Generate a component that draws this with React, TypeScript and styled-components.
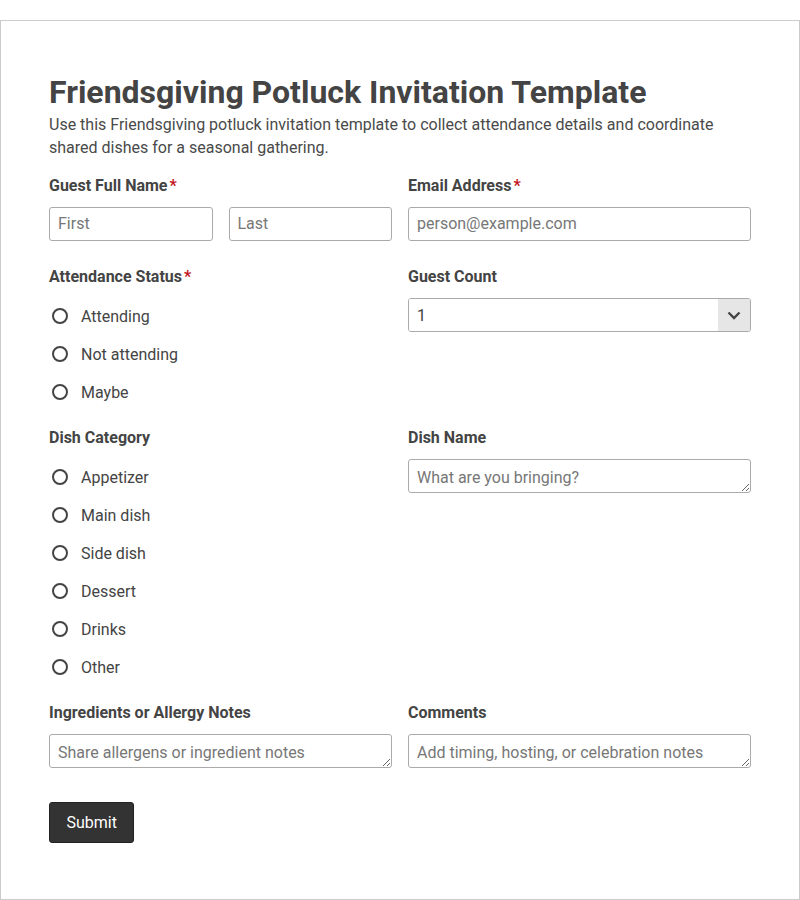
import React from "react";
import styled, { createGlobalStyle } from "styled-components";

const GlobalStyle = createGlobalStyle`
  * { box-sizing: border-box; }
  body {
    margin: 0;
    font-family: Roboto, "Liberation Sans", Arial, sans-serif;
    color: #444;
    background: #fff;
  }
`;

const Page = styled.div`
  margin-top: 20px;
  height: 880px;
  border: 1px solid #ccc;
  padding: 50px 48px 48px;
`;

const Title = styled.h1`
  margin: 0;
  font-size: 32px;
  line-height: 42px;
  font-weight: 700;
  color: #444;
`;

const Description = styled.p`
  margin: 0 0 16px;
  font-size: 16px;
  line-height: 23px;
  color: #4a4a4a;
`;

const Grid = styled.div`
  display: grid;
  grid-template-columns: 1fr 1fr;
  column-gap: 16px;
  row-gap: 25px;
`;

const Field = styled.div`
  display: flex;
  flex-direction: column;
  min-width: 0;
`;

const Label = styled.div`
  font-size: 16px;
  line-height: 22px;
  font-weight: 700;
  color: #444;
  margin-bottom: 10px;
`;

const Required = styled.span`
  color: #c0141e;
  margin-left: 2px;
`;

const Split = styled.div`
  display: grid;
  grid-template-columns: 1fr 1fr;
  gap: 16px;
`;

const TextInput = styled.input`
  width: 100%;
  height: 34px;
  border: 1px solid #aaa;
  border-radius: 3px;
  padding: 0 8px 2px;
  font: inherit;
  font-size: 16px;
  color: #444;
  &::placeholder { color: #777; }
`;

const TextArea = styled.textarea`
  width: 100%;
  height: 34px;
  min-height: 34px;
  border: 1px solid #aaa;
  border-radius: 3px;
  padding: 8px 8px 4px;
  font: inherit;
  font-size: 16px;
  line-height: 20px;
  color: #444;
  resize: vertical;
  display: block;
  &::placeholder { color: #777; }
`;

const SelectWrap = styled.div`
  position: relative;
  height: 34px;
  border: 1px solid #aaa;
  border-radius: 3px;
  display: flex;
  overflow: hidden;
`;

const Select = styled.select`
  flex: 1;
  appearance: none;
  border: none;
  background: #fff;
  padding: 0 8px;
  font: inherit;
  font-size: 16px;
  color: #444;
  outline: none;
`;

const Arrow = styled.div`
  width: 32px;
  background: #e6e6e6;
  display: flex;
  align-items: center;
  justify-content: center;
  pointer-events: none;
`;

const RadioList = styled.div`
  display: flex;
  flex-direction: column;
  gap: 16px;
  margin: 7px 0 -1px;
`;

const RadioRow = styled.label`
  display: flex;
  align-items: center;
  height: 22px;
  font-size: 16px;
  color: #444;
  gap: 13px;
`;

const Radio = styled.input.attrs({ type: "radio" })`
  appearance: none;
  margin: 0 0 0 3px;
  width: 16px;
  height: 16px;
  border: 2px solid #444;
  border-radius: 50%;
  background: #fff;
`;

const Submit = styled.button`
  margin-top: 34px;
  height: 41px;
  padding: 0 16.5px;
  background: #333;
  color: #fff;
  border: 1px solid #222;
  border-radius: 3px;
  font: inherit;
  font-size: 16px;
`;

const attendance = ["Attending", "Not attending", "Maybe"];
const dishes = ["Appetizer", "Main dish", "Side dish", "Dessert", "Drinks", "Other"];

export default function App() {
  return (
    <>
      <GlobalStyle />
      <Page>
        <Title>Friendsgiving Potluck Invitation Template</Title>
        <Description>
          Use this Friendsgiving potluck invitation template to collect attendance details and coordinate
          shared dishes for a seasonal gathering.
        </Description>
        <Grid>
          <Field>
            <Label>
              Guest Full Name<Required>*</Required>
            </Label>
            <Split>
              <TextInput placeholder="First" />
              <TextInput placeholder="Last" />
            </Split>
          </Field>
          <Field>
            <Label>
              Email Address<Required>*</Required>
            </Label>
            <TextInput placeholder="person@example.com" />
          </Field>

          <Field>
            <Label>
              Attendance Status<Required>*</Required>
            </Label>
            <RadioList>
              {attendance.map((a) => (
                <RadioRow key={a}>
                  <Radio name="attendance" />
                  {a}
                </RadioRow>
              ))}
            </RadioList>
          </Field>
          <Field>
            <Label>Guest Count</Label>
            <SelectWrap>
              <Select defaultValue="1">
                {[1, 2, 3, 4, 5, 6].map((n) => (
                  <option key={n}>{n}</option>
                ))}
              </Select>
              <Arrow>
                <svg width="14" height="14" viewBox="0 0 14 14">
                  <path d="M1.5 4.5 L7 10 L12.5 4.5" fill="none" stroke="#444" strokeWidth="2.4" />
                </svg>
              </Arrow>
            </SelectWrap>
          </Field>

          <Field>
            <Label>Dish Category</Label>
            <RadioList>
              {dishes.map((d) => (
                <RadioRow key={d}>
                  <Radio name="dish" />
                  {d}
                </RadioRow>
              ))}
            </RadioList>
          </Field>
          <Field>
            <Label>Dish Name</Label>
            <TextArea placeholder="What are you bringing?" rows={1} />
          </Field>

          <Field>
            <Label>Ingredients or Allergy Notes</Label>
            <TextArea placeholder="Share allergens or ingredient notes" rows={1} />
          </Field>
          <Field>
            <Label>Comments</Label>
            <TextArea placeholder="Add timing, hosting, or celebration notes" rows={1} />
          </Field>
        </Grid>
        <Submit type="button">Submit</Submit>
      </Page>
    </>
  );
}
